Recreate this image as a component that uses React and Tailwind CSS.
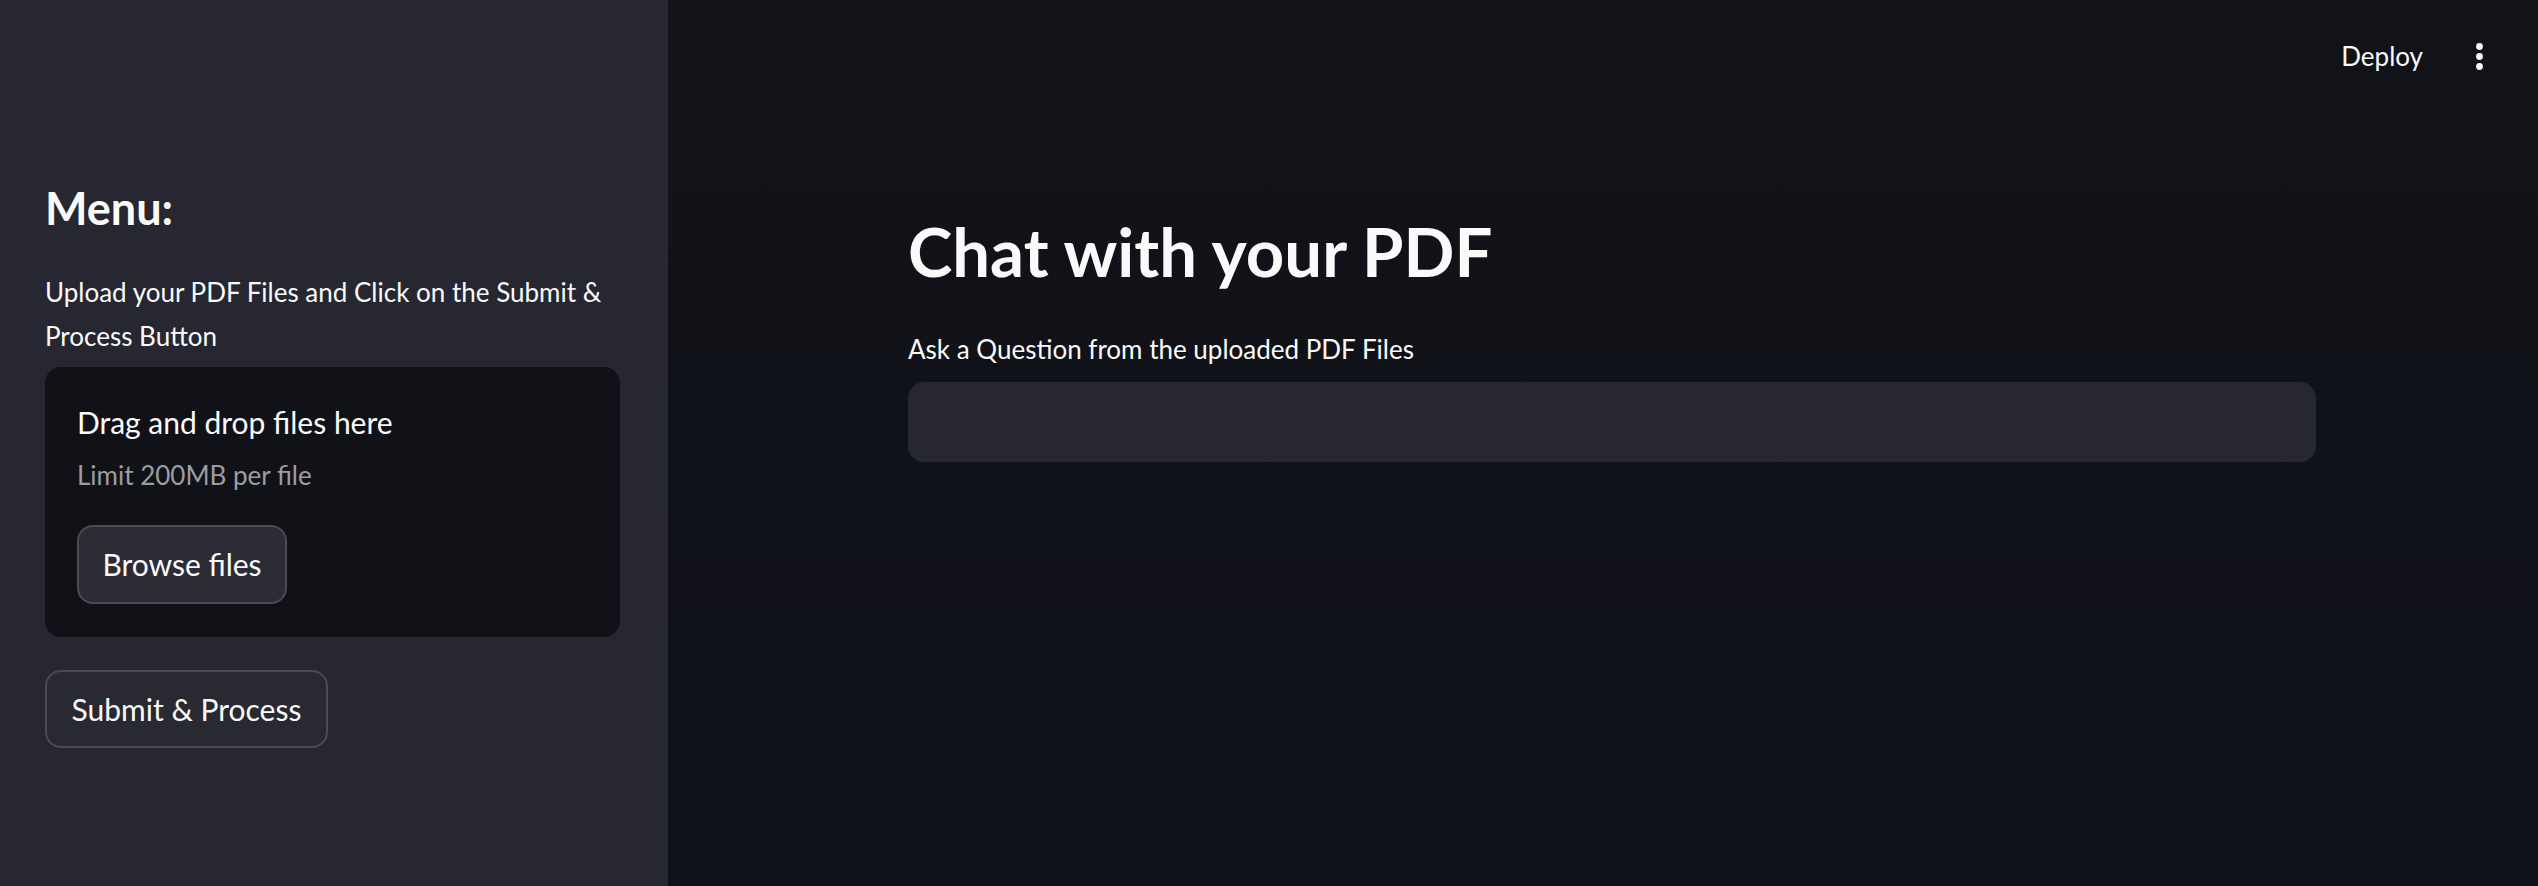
import React from 'react';

const font = { fontFamily: 'Lato, "Noto Sans", sans-serif' };

const Sidebar = () => (
    <aside className="w-[668px] shrink-0 bg-[#262730] pl-[45px] pr-[48px] pt-[179px] text-[#fafafa]">
        <h2 className="text-[45px] font-bold leading-[58px]">Menu:</h2>
        <p className="mt-[33px] text-[26px] leading-[44px]">
            Upload your PDF Files and Click on the Submit &amp; Process Button
        </p>

        <div className="mt-[9px] h-[270px] rounded-[16px] bg-[#111218] px-[32px] pt-[35px]">
            <div className="text-[30px] leading-[40px]">Drag and drop files here</div>
            <div className="mt-[13px] text-[26px] leading-[40px] text-[#9c9da2]">Limit 200MB per file</div>
            <button className="mt-[30px] flex h-[79px] w-[210px] items-center justify-center rounded-[16px] border-2 border-[#4a4b53] bg-[#2b2c36] text-[30px] text-[#fafafa]">
                Browse files
            </button>
        </div>

        <button className="mt-[33px] flex h-[78px] w-[283px] items-center justify-center rounded-[16px] border-2 border-[#4a4b53] bg-[#282931] text-[30px] text-[#fafafa]">
            Submit &amp; Process
        </button>
    </aside>
);

const Header = () => (
    <header className="flex h-[112px] items-center justify-end pr-[55px] text-[#fafafa]">
        <span className="text-[26px]">Deploy</span>
        <svg width="7" height="27" viewBox="0 0 7 27" className="ml-[53px]" fill="#fafafa">
            <circle cx="3.5" cy="3.5" r="3.4" />
            <circle cx="3.5" cy="13.5" r="3.4" />
            <circle cx="3.5" cy="23.5" r="3.4" />
        </svg>
    </header>
);

export default function App() {
    return (
        <div className="flex h-[886px] w-[2538px] overflow-hidden" style={font}>
            <Sidebar />
            <main className="flex-1 bg-linear-to-b from-[#121318] to-[#0f111a]">
                <Header />
                <div className="pl-[240px] text-[#fafafa]">
                    <div className="w-[1408px]">
                        <h1 className="mt-[96px] text-[67px] font-bold leading-[86px]">Chat with your PDF</h1>
                        <label className="mt-[35px] block text-[26px] leading-[40px]">
                            Ask a Question from the uploaded PDF Files
                        </label>
                        <input
                            type="text"
                            className="mt-[13px] h-[80px] w-full rounded-[16px] bg-[#262730] px-[24px] text-[26px] text-[#fafafa] outline-none"
                        />
                    </div>
                </div>
            </main>
        </div>
    );
}
